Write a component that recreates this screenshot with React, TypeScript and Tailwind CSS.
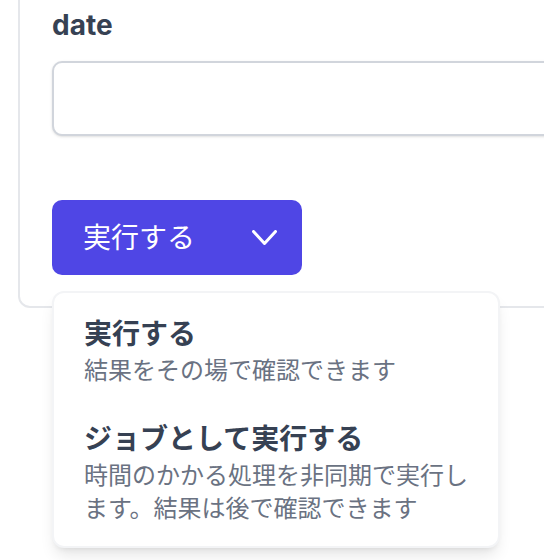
// Run form card with a split "実行する" button and its open dropdown menu.

const FONT = "font-['Inter','Noto_Sans_CJK_JP',sans-serif]";

const options = [
  { title: '実行する', description: '結果をその場で確認できます' },
  {
    title: 'ジョブとして実行する',
    description: '時間のかかる処理を非同期で実行します。結果は後で確認できます',
  },
];

export default function App() {
  return (
    <div className={`h-[560px] w-[544px] overflow-hidden bg-white ${FONT}`}>
      <div className="pl-[18px]">
        <div className="-mt-[29px] w-[640px] rounded-[12px] border-2 border-gray-200 bg-white px-8 pb-[31px] pt-8">
          <label className="block text-[28px] font-bold leading-[40px] text-gray-700">date</label>
          <input
            type="text"
            className="mt-4 block h-[75px] w-full rounded-[10px] border-2 border-gray-300 bg-white shadow-sm outline-none"
          />

          <div className="relative mt-16 w-[250px]">
            <button
              type="button"
              className="flex h-[75px] w-full items-center justify-between rounded-[10px] bg-[#4f46e5] pl-[31px] pr-[25px] text-[28px] leading-[40px] text-white"
            >
              <span>実行する</span>
              <ChevronDown />
            </button>

            <div className="absolute left-0 top-[91px] z-10 w-[448px] rounded-[12px] border-2 border-gray-100 bg-white py-[5px] shadow-lg">
              {options.map((o) => (
                <div key={o.title} className="py-4 pl-[30px] pr-[20px]">
                  <p className="text-[28px] font-bold leading-[40px] text-gray-700">{o.title}</p>
                  <p className="text-[24px] leading-[33px] text-gray-500">{o.description}</p>
                </div>
              ))}
            </div>
          </div>
        </div>
      </div>
    </div>
  );
}

function ChevronDown() {
  return (
    <svg
      width="25"
      height="15"
      viewBox="0 0 25 15"
      fill="none"
      stroke="currentColor"
      strokeWidth="3"
      strokeLinecap="round"
      strokeLinejoin="round"
      aria-hidden="true"
    >
      <polyline points="1.5,1.5 12.5,13.5 23.5,1.5" />
    </svg>
  );
}
